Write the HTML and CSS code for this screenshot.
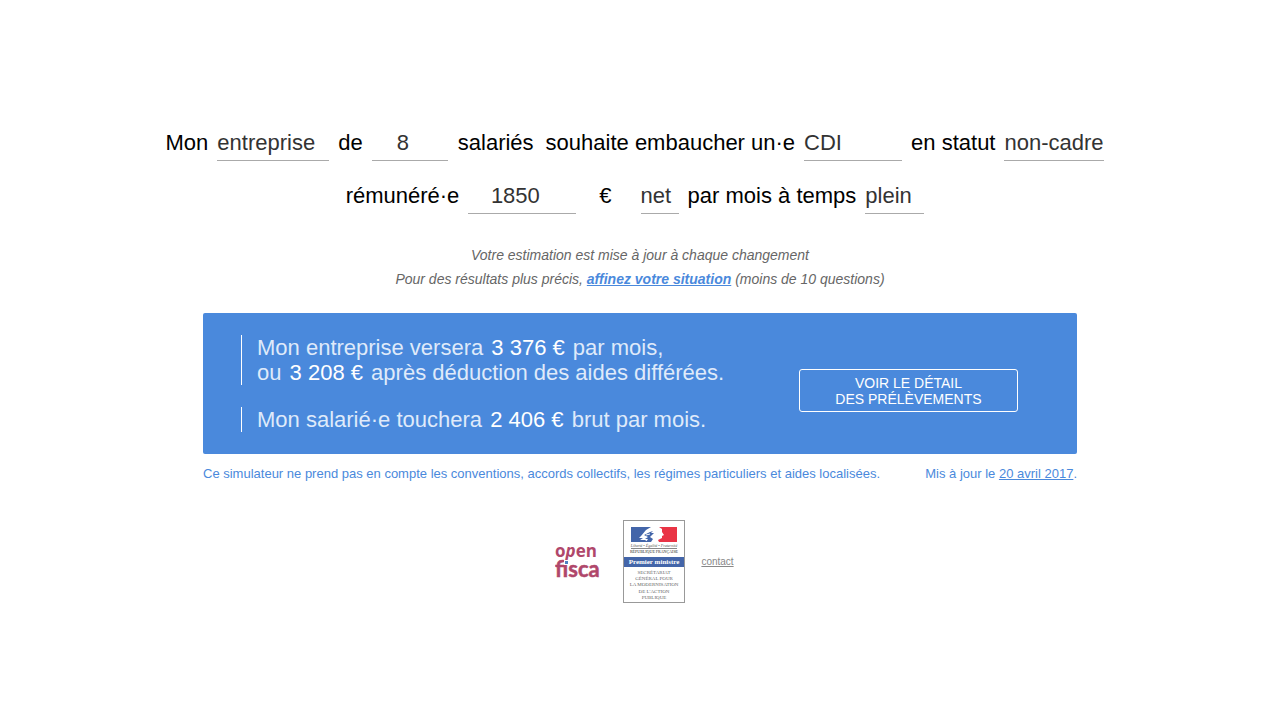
FILE: index.html
```
<!DOCTYPE html>
<html lang="fr">
<head>
<meta charset="utf-8">
<meta name="viewport" content="width=device-width, initial-scale=1">
<title>Simulateur de coût d'embauche</title>
<link rel="stylesheet" href="styles.css">
</head>
<body>
<main class="simulator">
  <form class="sentence">
    <div class="sentence-row">
      <label for="structure">Mon</label>
      <select id="structure" class="field field-structure"><option>entreprise</option><option>association</option></select>
      <label for="headcount">de</label>
      <input id="headcount" class="field field-headcount" type="number" value="8">
      <label for="headcount" class="unit">salariés</label>
      <label for="contract">souhaite embaucher un·e</label>
      <select id="contract" class="field field-contract"><option>CDI</option><option>CDD</option></select>
      <label for="status">en statut</label>
      <select id="status" class="field field-status"><option>non-cadre</option><option>cadre</option></select>
    </div>
    <div class="sentence-row">
      <label for="salary">rémunéré·e</label>
      <input id="salary" class="field field-salary" type="number" value="1850">
      <label for="basis" class="currency">€</label>
      <select id="basis" class="field field-basis" aria-label="net ou brut"><option>net</option><option>brut</option></select>
      <label for="worktime">par mois à temps</label>
      <select id="worktime" class="field field-worktime"><option>plein</option><option>partiel</option></select>
    </div>
  </form>

  <div class="hints">
    <p>Votre estimation est mise à jour à chaque changement</p>
    <p>Pour des résultats plus précis, <a href="#affiner">affinez votre situation</a> (moins de 10 questions)</p>
  </div>

  <section class="results">
    <div class="panel">
      <div class="summary">
        <p>Mon entreprise versera <strong>3 376 €</strong> par mois,<br>ou <strong>3 208 €</strong> après déduction des aides différées.</p>
        <p>Mon salarié·e touchera <strong>2 406 €</strong> brut par mois.</p>
      </div>
      <button class="detail" type="button">VOIR LE DÉTAIL<br>DES PRÉLÈVEMENTS</button>
    </div>
    <div class="notes">
      <p>Ce simulateur ne prend pas en compte les conventions, accords collectifs, les régimes particuliers et aides localisées.</p>
      <p>Mis à jour le <a href="#maj">20 avril 2017</a>.</p>
    </div>
  </section>

  <footer class="footer">
    <a class="openfisca" href="#openfisca">
      <svg width="46" height="52" viewBox="0 0 46 52" role="img" aria-label="openfisca">
        <g fill="#b0476b" font-weight="700">
          <text x="0" y="21" font-family="'Open Sans', sans-serif" font-size="17">o<tspan font-style="italic">p</tspan>en</text>
          <text x="0" y="41" font-family="Lato, sans-serif" font-size="22" stroke="#b0476b" stroke-width="0.5">fisca</text>
        </g>
        <rect x="9" y="24" width="5" height="5" fill="#fff"/>
        <rect x="10" y="25" width="3" height="3" fill="#4a82c4"/>
      </svg>
    </a>
    <a class="ministry" href="#sgmap">
      <svg width="62" height="83" viewBox="0 0 62 83" role="img" aria-label="Premier ministre">
        <rect x="0.5" y="0.5" width="61" height="82" fill="#fff" stroke="#999"/>
        <path d="M8 7h20l-5 3-5 6-2 2 4 0-3 2 5 0 3 2H8z" fill="#4365a9"/>
        <path d="M36 7h18v15H36l-1-2 4-2 0-2 2-1-2-3 0-3z" fill="#e93445"/>
        <path d="M21 15l6-3 3-1-2 2 3 0-4 4 3 2-2 3h-5l2-3-3 0 3-2z" fill="#4365a9"/>
        <path d="M23 15l4-1" stroke="#fff" fill="none"/>
        <g text-anchor="middle" font-family="'Liberation Serif', serif">
          <text x="31" y="27" font-size="4" font-style="italic" fill="#555">Liberté • Égalité • Fraternité</text>
          <path d="M8 28.500h46" stroke="#888"/>
          <text x="31" y="33" font-size="4" fill="#222">RÉPUBLIQUE FRANÇAISE</text>
          <rect x="1" y="37" width="60" height="10" fill="#4365a9"/>
          <text x="31" y="44" font-size="7" font-weight="700" fill="#fff">Premier ministre</text>
          <g font-size="5" fill="#666">
            <text x="31" y="54">SECRÉTARIAT</text>
            <text x="31" y="60">GÉNÉRAL POUR</text>
            <text x="31" y="66">LA MODERNISATION</text>
            <text x="31" y="73">DE L'ACTION</text>
            <text x="31" y="79">PUBLIQUE</text>
          </g>
        </g>
      </svg>
    </a>
    <a class="contact" href="#contact">contact</a>
  </footer>
</main>
</body>
</html>
```
FILE: styles.css
```
* { box-sizing: border-box; }

body {
  margin: 0;
  background: #fff;
  color: #000;
  font-family: "Liberation Sans", Arial, sans-serif;
}

p { margin: 0; }

.simulator { padding: 124px 16px 40px; }

.sentence {
  display: flex;
  flex-direction: column;
  gap: 16px;
  font-size: 22px;
}

.sentence-row {
  display: flex;
  flex-wrap: wrap;
  justify-content: center;
  align-items: center;
  gap: 9px;
  padding-right: 10px;
}

.field {
  height: 37px;
  margin: 0;
  padding: 0;
  border: 0;
  border-bottom: 1px solid #aaa;
  border-radius: 0;
  outline: 0;
  background: transparent;
  color: #333;
  font: inherit;
  appearance: none;
}

input.field {
  padding: 2px 14px 0 0;
  text-align: center;
  appearance: textfield;
}

.field::-webkit-inner-spin-button { display: none; }

.field-structure { width: 112px; }
.field-headcount { width: 76px; }
.field-contract { width: 98px; }
.field-status { width: 100px; }
.field-salary { width: 108px; }
.field-basis { width: 38px; }
.field-worktime { width: 59px; }

.unit { padding: 0 3px 0 1px; }

.currency { padding: 0 20px 0 14px; }

.hints {
  margin-top: 29px;
  color: #666;
  font-size: 14px;
  font-style: italic;
  line-height: 24px;
  text-align: center;
}

.hints a { color: #4a89dc; font-weight: 700; }

.results {
  max-width: 874px;
  margin: 22px auto 0;
}

.panel {
  display: flex;
  justify-content: space-between;
  align-items: center;
  gap: 24px;
  padding: 22px 59px 22px 38px;
  border-radius: 2px;
  background: #4a89dc;
  color: #fff;
}

.summary {
  display: flex;
  flex-direction: column;
  gap: 22px;
  font-size: 22px;
  line-height: 25px;
}

.summary p {
  padding-left: 15px;
  border-left: 1px solid #fff;
  color: #dfeafa;
}

.summary strong {
  margin: 0 2px;
  color: #fff;
  font-weight: 400;
}

.detail {
  flex: none;
  width: 219px;
  padding: 5px 0 4px;
  margin-top: 13px;
  border: 1px solid #fff;
  border-radius: 3px;
  background: transparent;
  color: #fff;
  font: 14px/16px "Liberation Sans", Arial, sans-serif;
}

.notes {
  display: flex;
  flex-wrap: wrap;
  justify-content: space-between;
  margin-top: 12px;
  color: #4a89dc;
  font-size: 13px;
  line-height: 16px;
}

.notes a { color: inherit; }

.footer {
  display: flex;
  justify-content: center;
  align-items: center;
  margin-top: 38px;
  padding-left: 9px;
}

.footer svg { display: block; }

.ministry { margin: 0 16px 0 22px; }

.contact {
  color: #888;
  font-size: 10px;
}
```
